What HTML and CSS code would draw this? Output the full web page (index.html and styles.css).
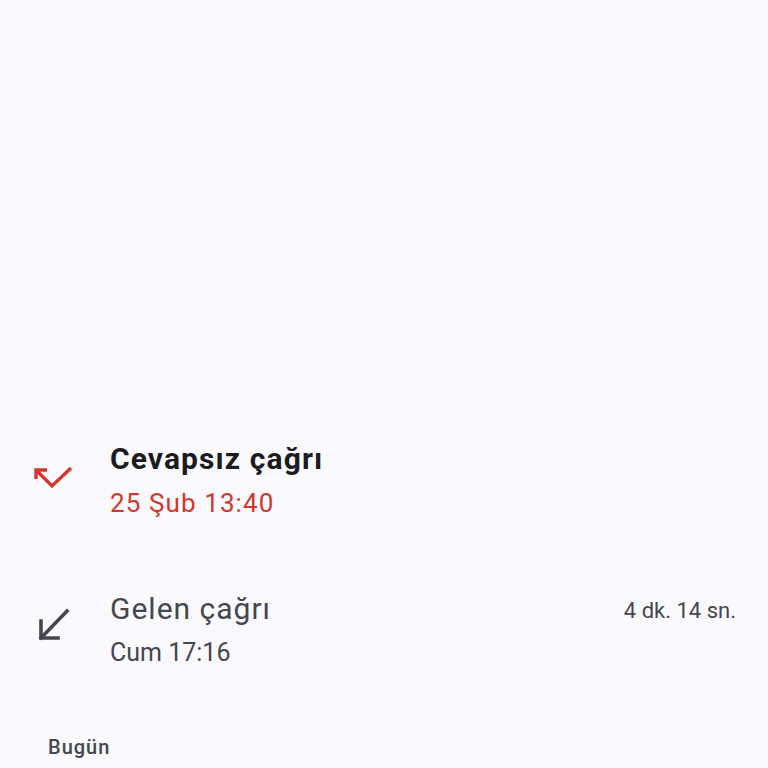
FILE: index.html
```html
<!DOCTYPE html>
<html lang="tr">
<head>
<meta charset="utf-8">
<link rel="stylesheet" href="styles.css">
</head>
<body>
<main class="screen">
  <ul class="calls">
    <li class="call">
      <div class="call-icon">
        <svg viewBox="0 0 48 48" width="48" height="48">
          <polyline points="17,20 6,20 6,29" class="ic-missed"/>
          <polyline points="6,20 22,36 41,18" class="ic-missed"/>
        </svg>
      </div>
      <div class="call-text">
        <div class="call-title missed">Cevapsız çağrı</div>
        <div class="call-time missed-time">25 Şub 13:40</div>
      </div>
    </li>
    <li class="call">
      <div class="call-icon">
        <svg viewBox="0 0 48 48" width="48" height="48">
          <polyline points="11,21 11,38 28,38" class="ic-in"/>
          <line x1="11" y1="38" x2="37" y2="11" class="ic-in"/>
        </svg>
      </div>
      <div class="call-text">
        <div class="call-title">Gelen çağrı</div>
        <div class="call-time plain-time">Cum 17:16</div>
      </div>
      <div class="call-duration">4 dk. 14 sn.</div>
    </li>
  </ul>
  <div class="section-label">Bugün</div>
</main>
</body>
</html>
```

FILE: styles.css
```css
html, body {
  margin: 0;
  padding: 0;
  background: #f9f9fe;
}
body {
  font-family: Roboto, "Noto Sans", sans-serif;
  color: #1f1f1f;
}
.screen {
  height: 768px;
  box-sizing: border-box;
  padding-top: 436px;
  overflow: hidden;
}
.calls {
  list-style: none;
  margin: 0;
  padding: 0;
  display: flex;
  flex-direction: column;
  gap: 61px;
}
.call {
  display: flex;
  align-items: center;
  padding: 0 32px 0 30px;
}
.call-icon {
  width: 48px;
  height: 48px;
  margin-right: 32px;
  margin-top: -13px;
}
.call-icon svg {
  display: block;
}
.ic-missed {
  fill: none;
  stroke: #d3362c;
  stroke-width: 3.4;
  stroke-linejoin: miter;
  stroke-linecap: butt;
}
.ic-in {
  fill: none;
  stroke: #45464f;
  stroke-width: 3.6;
  stroke-linejoin: miter;
  stroke-linecap: square;
}
.call-text {
  flex: 1;
  display: flex;
  flex-direction: column;
}
.call-title {
  font-size: 30px;
  line-height: 45px;
  letter-spacing: 1px;
  color: #46464f;
}
.call-title.missed {
  font-weight: 700;
  letter-spacing: 1.1px;
  color: #1b1b21;
}
.call-time {
  font-size: 26px;
  line-height: 44px;
  letter-spacing: 1.1px;
  color: #46464f;
}
.plain-time {
  font-size: 25px;
  letter-spacing: 0;
}
.missed-time {
  color: #d3362c;
}
.call-duration {
  font-size: 22px;
  line-height: 45px;
  color: #46464f;
  align-self: flex-start;
  margin-top: 2px;
}
.section-label {
  margin-top: 60px;
  padding-left: 48px;
  font-size: 20px;
  font-weight: 500;
  letter-spacing: 1px;
  color: #46464f;
  line-height: 24px;
}
```
